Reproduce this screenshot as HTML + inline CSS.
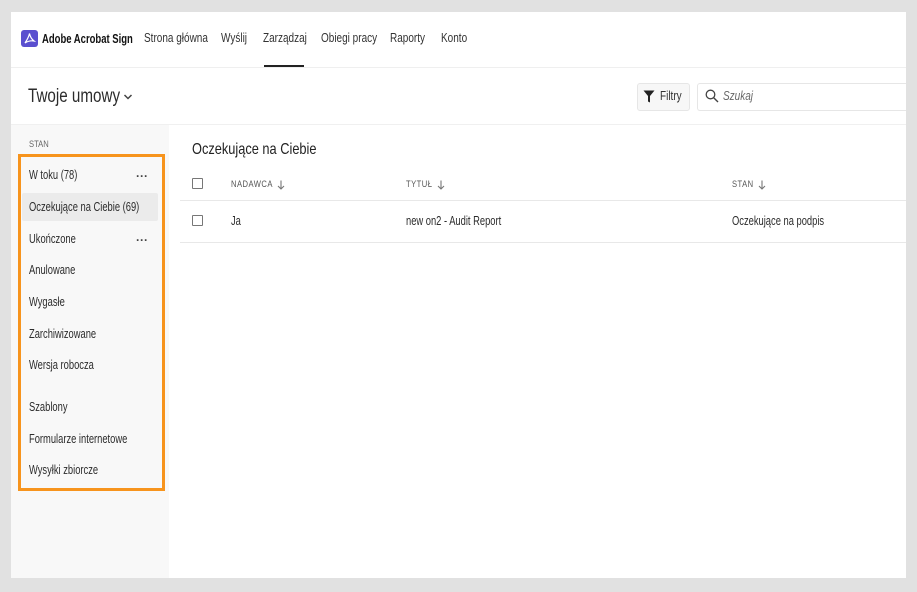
<!DOCTYPE html>
<html><head><meta charset="utf-8">
<style>
*{margin:0;padding:0;box-sizing:border-box}
body{width:917px;height:592px;background:#e1e1e1;position:relative;overflow:hidden;font-family:"Liberation Sans",sans-serif;color:#2c2c2c}
.a{position:absolute;white-space:nowrap}
.t{display:inline-block;transform:scaleX(.8);transform-origin:left center}
.s{display:inline-block;transform:scaleX(.72);transform-origin:left center}
#main{position:absolute;left:11px;top:12px;width:895px;height:566px;background:#fff}
</style></head><body>
<div id="main"></div>
<svg class="a" style="left:21px;top:30px" width="17" height="17" viewBox="0 0 17 17"><rect width="17" height="17" rx="3" fill="#5a4fcf"/><path d="M4 13 C6 10 8 6 8.5 3.5 C9 6 10.5 9 13 11 C10 10.5 7 11 4 13Z" fill="none" stroke="#fff" stroke-width="1.2"/></svg>
<div class="a" style="left:42px;top:31px;font-size:13px;font-weight:bold;color:#111"><span class="t" style="transform:scaleX(.73)">Adobe Acrobat Sign</span></div>
<div class="a" style="left:144px;top:31px;font-size:12.5px;color:#333"><span class="t">Strona główna</span></div>
<div class="a" style="left:221px;top:31px;font-size:12.5px;color:#333"><span class="t">Wyślij</span></div>
<div class="a" style="left:263px;top:31px;font-size:12.5px;color:#333"><span class="t">Zarządzaj</span></div>
<div class="a" style="left:264px;top:65px;width:40px;height:2px;background:#222"></div>
<div class="a" style="left:321px;top:31px;font-size:12.5px;color:#333"><span class="t">Obiegi pracy</span></div>
<div class="a" style="left:390px;top:31px;font-size:12.5px;color:#333"><span class="t">Raporty</span></div>
<div class="a" style="left:441px;top:31px;font-size:12.5px;color:#333"><span class="t">Konto</span></div>
<div class="a" style="left:11px;top:67px;width:895px;height:1px;background:#efefef"></div>
<div class="a" style="left:28px;top:86px;font-size:19px;color:#2c2c2c"><span class="t">Twoje umowy</span></div>
<svg class="a" style="left:123px;top:93px" width="10" height="8" viewBox="0 0 10 8"><path d="M1.5 2 L5 5.5 L8.5 2" fill="none" stroke="#444" stroke-width="1.5"/></svg>
<div class="a" style="left:637px;top:83px;width:53px;height:28px;border:1px solid #e6e6e6;border-radius:3px;background:#f7f7f7"></div>
<svg class="a" style="left:643px;top:90px" width="12" height="13" viewBox="0 0 12 13"><path d="M0.5 0.5 H11.5 L7 6 V12.5 L5 11.5 V6Z" fill="#222"/></svg>
<div class="a" style="left:660px;top:89px;font-size:12.5px;color:#333"><span class="t">Filtry</span></div>
<div class="a" style="left:697px;top:83px;width:209px;height:28px;border:1px solid #e6e6e6;border-right:none;border-radius:3px 0 0 3px;background:#fff"></div>
<svg class="a" style="left:705px;top:89px" width="14" height="14" viewBox="0 0 14 14"><circle cx="5.5" cy="5.5" r="4.3" fill="none" stroke="#444" stroke-width="1.3"/><path d="M8.7 8.7 L13 13" stroke="#444" stroke-width="1.4"/></svg>
<div class="a" style="left:723px;top:89px;font-size:12.5px;font-style:italic;color:#666"><span class="t">Szukaj</span></div>
<div class="a" style="left:11px;top:124px;width:895px;height:1px;background:#f0f0f0"></div>
<div class="a" style="left:11px;top:125px;width:158px;height:453px;background:#f8f8f8"></div>
<div class="a" style="left:29px;top:139px;font-size:9.5px;color:#666"><span class="t">STAN</span></div>
<div class="a" style="left:22px;top:193px;width:136px;height:28px;background:#ebebeb;border-radius:2px"></div>
<div class="a" style="left:18px;top:154px;width:147px;height:337px;border:3px solid #f7941d"></div>
<div class="a" style="left:29px;top:167px;font-size:13px"><span class="s">W toku (78)</span></div>
<div class="a" style="left:136px;top:169px;font-size:12px;font-weight:bold;color:#444;letter-spacing:0px">···</div>
<div class="a" style="left:29px;top:199px;font-size:13px"><span class="s">Oczekujące na Ciebie (69)</span></div>
<div class="a" style="left:29px;top:231px;font-size:13px"><span class="s">Ukończone</span></div>
<div class="a" style="left:136px;top:233px;font-size:12px;font-weight:bold;color:#444;letter-spacing:0px">···</div>
<div class="a" style="left:29px;top:262px;font-size:13px"><span class="s">Anulowane</span></div>
<div class="a" style="left:29px;top:294px;font-size:13px"><span class="s">Wygasłe</span></div>
<div class="a" style="left:29px;top:326px;font-size:13px"><span class="s">Zarchiwizowane</span></div>
<div class="a" style="left:29px;top:357px;font-size:13px"><span class="s">Wersja robocza</span></div>
<div class="a" style="left:29px;top:399px;font-size:13px"><span class="s">Szablony</span></div>
<div class="a" style="left:29px;top:431px;font-size:13px"><span class="s">Formularze internetowe</span></div>
<div class="a" style="left:29px;top:462px;font-size:13px"><span class="s">Wysyłki zbiorcze</span></div>
<div class="a" style="left:192px;top:141px;font-size:16px;color:#222"><span class="t">Oczekujące na Ciebie</span></div>
<div class="a" style="left:192px;top:178px;width:11px;height:11px;border:1.5px solid #777;border-radius:1px"></div>
<div class="a" style="left:231px;top:179px;font-size:9.5px;color:#555;letter-spacing:.6px"><span class="t">NADAWCA</span></div>
<div class="a" style="left:406px;top:179px;font-size:9.5px;color:#555;letter-spacing:.6px"><span class="t">TYTUŁ</span></div>
<div class="a" style="left:732px;top:179px;font-size:9.5px;color:#555;letter-spacing:.6px"><span class="t">STAN</span></div>
<svg class="a" style="left:277px;top:180px" width="8" height="10" viewBox="0 0 8 10"><path d="M4 0.5 V9 M1 6 L4 9 L7 6" fill="none" stroke="#777" stroke-width="1.1"/></svg>
<svg class="a" style="left:437px;top:180px" width="8" height="10" viewBox="0 0 8 10"><path d="M4 0.5 V9 M1 6 L4 9 L7 6" fill="none" stroke="#777" stroke-width="1.1"/></svg>
<svg class="a" style="left:758px;top:180px" width="8" height="10" viewBox="0 0 8 10"><path d="M4 0.5 V9 M1 6 L4 9 L7 6" fill="none" stroke="#777" stroke-width="1.1"/></svg>
<div class="a" style="left:180px;top:200px;width:726px;height:1px;background:#e8e8e8"></div>
<div class="a" style="left:192px;top:215px;width:11px;height:11px;border:1.5px solid #777;border-radius:1px"></div>
<div class="a" style="left:231px;top:213px;font-size:13px"><span class="s">Ja</span></div>
<div class="a" style="left:406px;top:213px;font-size:13px"><span class="s">new on2 - Audit Report</span></div>
<div class="a" style="left:732px;top:213px;font-size:13px"><span class="s">Oczekujące na podpis</span></div>
<div class="a" style="left:180px;top:242px;width:726px;height:1px;background:#e8e8e8"></div>
</body></html>
